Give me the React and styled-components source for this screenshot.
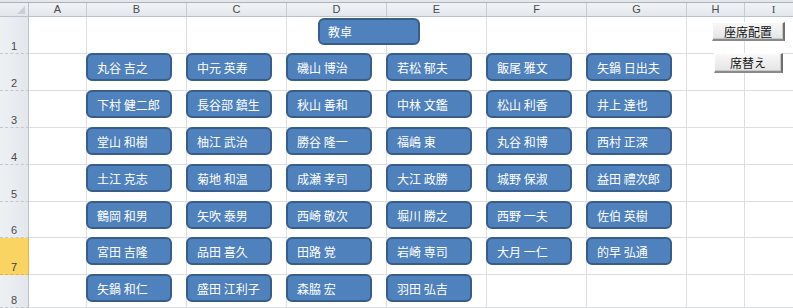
import React from "react";
import styled, { createGlobalStyle, css } from "styled-components";

const Global = createGlobalStyle`
  html, body { margin: 0; padding: 0; background: #ffffff; overflow: hidden; }
  body { font-family: "Liberation Sans", "Noto Sans CJK JP", sans-serif; }
`;

const Page = styled.div`
  width: 793px;
  height: 308px;
  display: flex;
  flex-direction: column;
  overflow: hidden;
  background: #ffffff;
`;

const TopStrip = styled.div`
  height: 2px;
  flex: none;
  background: #e3e6ea;
  border-bottom: 1px solid #a9b1bc;
`;

const Sheet = styled.div`
  flex: 1;
  width: 803px;
  display: grid;
  grid-template-columns: 29px 58px repeat(6, 100px) 58px 58px;
  grid-template-rows: 14px 37px 37px 37px 37px 37px 36px 37px 1fr;
`;

const Corner = styled.div`
  background: linear-gradient(#eef1f4, #e2e6eb);
  border-right: 1px solid #b9c1cc;
  border-bottom: 1px solid #b9c1cc;
  position: relative;
  &::after {
    content: "";
    position: absolute;
    right: 3px;
    bottom: 2px;
    width: 0;
    height: 0;
    border-left: 8px solid transparent;
    border-bottom: 8px solid #c9ced6;
  }
`;

const ColHead = styled.div`
  background: linear-gradient(#f1f3f6, #e3e7ec);
  border-right: 1px solid #c4ccd8;
  border-bottom: 1px solid #b9c1cc;
  font-size: 11px;
  line-height: 13px;
  color: #4a4a4a;
  font-family: ${(p) => (p.$serif ? '"Liberation Serif", serif' : '"Liberation Sans", sans-serif')};
  display: flex;
  justify-content: center;
  align-items: center;
`;

const RowHead = styled.div`
  background: ${(p) => (p.$active ? "#f9d463" : "linear-gradient(90deg, #eef1f4, #e3e7ec)")};
  border-right: 1px solid ${(p) => (p.$active ? "#e0b44a" : "#b9c1cc")};
  border-bottom: 1px dashed ${(p) => (p.$active ? "#e0b44a" : "#c2c8d0")};
  font-size: 11px;
  line-height: 12px;
  color: ${(p) => (p.$active ? "#3b3b3b" : "#4a4a4a")};
  display: flex;
  justify-content: center;
  align-items: flex-end;
  padding-bottom: 1px;
  box-sizing: border-box;
`;

const Cell = styled.div`
  border-right: 1px solid #dcdee1;
  border-bottom: 1px solid #dcdee1;
  display: flex;
  align-items: flex-start;
  min-width: 0;
  box-sizing: border-box;
`;

const shapeBase = css`
  position: relative;
  z-index: 1;
  flex: none;
  box-sizing: border-box;
  background: #4f81bd;
  border: 2px solid #385d8a;
  border-radius: 6px;
  color: #ffffff;
  font-family: "Noto Sans CJK JP", "Liberation Sans", sans-serif;
  font-size: 12px;
  display: flex;
  align-items: center;
  white-space: nowrap;
`;

const Seat = styled.div`
  ${shapeBase};
  width: 86px;
  height: 28px;
  margin: -1px 0 0 -1px;
  padding-left: 9px;
`;

const Desk = styled.div`
  ${shapeBase};
  width: 102px;
  height: 27px;
  margin: 1px 0 0 31px;
  padding-left: 8px;
`;

const FormButton = styled.div`
  position: relative;
  z-index: 1;
  flex: none;
  box-sizing: border-box;
  width: ${(p) => p.$w}px;
  height: ${(p) => p.$h}px;
  margin-top: ${(p) => p.$top}px;
  margin-left: ${(p) => p.$left}px;
  background: linear-gradient(#f8f8f8, #e4e4e4);
  border-top: 1px solid #ffffff;
  border-left: 1px solid #ffffff;
  border-right: 2px solid #6f6f6f;
  border-bottom: 2px solid #8a8a8a;
  box-shadow: inset -1px -1px 0 #c8c8c8;
  color: #111111;
  font-family: "Noto Sans CJK JP", "Liberation Sans", sans-serif;
  font-size: 12px;
  display: flex;
  align-items: center;
  justify-content: center;
  white-space: nowrap;
`;

const cols = ["A", "B", "C", "D", "E", "F", "G", "H", "I"];

const seats = [
  ["丸谷 吉之", "中元 英寿", "磯山 博治", "若松 郁夫", "飯尾 雅文", "矢鍋 日出夫"],
  ["下村 健二郎", "長谷部 鎮生", "秋山 善和", "中林 文鑑", "松山 利香", "井上 達也"],
  ["堂山 和樹", "柚江 武治", "勝谷 隆一", "福嶋 東", "丸谷 和博", "西村 正深"],
  ["土江 克志", "菊地 和温", "成瀬 孝司", "大江 政勝", "城野 保淑", "益田 禮次郎"],
  ["鶴岡 和男", "矢吹 泰男", "西崎 敬次", "堀川 勝之", "西野 一夫", "佐伯 英樹"],
  ["宮田 吉隆", "品田 喜久", "田路 覚", "岩崎 専司", "大月 一仁", "的早 弘通"],
  ["矢鍋 和仁", "盛田 江利子", "森脇 宏", "羽田 弘吉"],
];

function cellContent(row, colIdx) {
  // colIdx: 0 = A ... 8 = I
  if (row === 1 && colIdx === 3) return <Desk>教卓</Desk>;
  if (row === 1 && colIdx === 7)
    return (
      <FormButton $w={73} $h={19} $top={5} $left={25}>
        座席配置
      </FormButton>
    );
  if (row === 2 && colIdx === 7)
    return (
      <FormButton $w={69} $h={20} $top={-1} $left={27}>
        席替え
      </FormButton>
    );
  if (row >= 2 && colIdx >= 1 && colIdx <= 6) {
    const name = seats[row - 2][colIdx - 1];
    if (name) return <Seat>{name}</Seat>;
  }
  return null;
}

export default function App() {
  const rows = [1, 2, 3, 4, 5, 6, 7, 8];
  return (
    <Page>
      <Global />
      <TopStrip />
      <Sheet>
        <Corner />
        {cols.map((c) => (
          <ColHead key={c} $serif={c === "I"}>
            {c}
          </ColHead>
        ))}
        {rows.map((r) => (
          <React.Fragment key={r}>
            <RowHead $active={r === 7}>{r}</RowHead>
            {cols.map((c, i) => (
              <Cell key={c}>{cellContent(r, i)}</Cell>
            ))}
          </React.Fragment>
        ))}
      </Sheet>
    </Page>
  );
}
